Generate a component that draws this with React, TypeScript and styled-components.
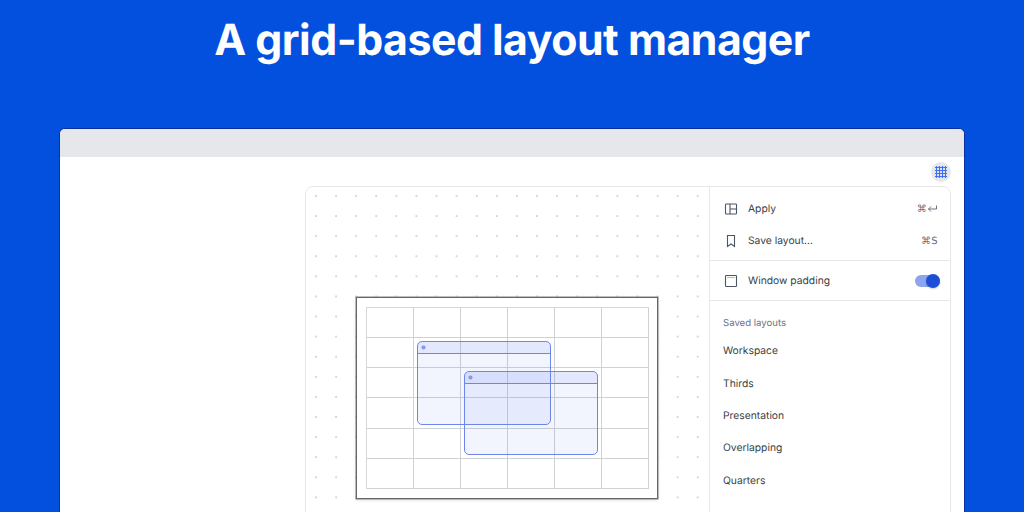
import React from "react";
import styled, { createGlobalStyle } from "styled-components";

const Global = createGlobalStyle`
  html, body { margin: 0; padding: 0; width: 1024px; height: 512px; overflow: hidden; background: #0450de; }
  * { box-sizing: border-box; }
  body { font-family: Inter, "Liberation Sans", sans-serif; text-rendering: geometricPrecision; }
`;

const Page = styled.div`
  width: 1024px;
  height: 512px;
  overflow: hidden;
  background: #0450de;
  display: flex;
  flex-direction: column;
  align-items: center;
`;

const Title = styled.h1`
  flex: none;
  margin: 0;
  height: 128px;
  padding-top: 13px;
  font-size: 42.8px;
  line-height: 56px;
  font-weight: 700;
  letter-spacing: -0.5px;
  color: #fff;
  white-space: nowrap;
`;

const AppWindow = styled.div`
  width: 906px;
  height: 400px;
  flex: none;
  background: #fff;
  border: 1px solid #0b2f9e;
  border-bottom: 0;
  border-radius: 6px 6px 0 0;
  overflow: hidden;
`;

const TitleBar = styled.div`
  height: 28px;
  background: #e5e7eb;
`;

const Body = styled.div`
  display: flex;
  flex-direction: column;
  align-items: flex-end;
  padding: 5px 13px 0 0;
`;

const GridButton = styled.div`
  width: 20px;
  height: 20px;
  border-radius: 50%;
  background: #e5e7eb;
  display: flex;
  align-items: center;
  justify-content: center;
`;

const Panel = styled.div`
  width: 646px;
  height: 340px;
  margin-top: 4px;
  border: 1px solid #e5e7eb;
  border-radius: 8px 8px 0 0;
  display: flex;
  overflow: hidden;
`;

const Canvas = styled.div`
  flex: none;
  width: 403px;
  padding: 110px 0 0 50px;
  background-image: radial-gradient(circle at 1px 1px, #d3d6db 0.7px, transparent 1.1px);
  background-size: 20.1px 20.1px;
  background-position: 9px 8px;
`;

const Monitor = styled.div`
  position: relative;
  width: 302px;
  height: 202px;
  padding: 9px;
  background: #fff;
  border: 1px solid #666;
  box-shadow: 0 0 0 0.5px #888, 0 1px 3px rgba(0, 0, 0, 0.15);
`;

const CellGrid = styled.div`
  display: grid;
  grid-template-columns: repeat(6, 1fr);
  grid-template-rows: repeat(6, 1fr);
  width: 282.5px;
  height: 182px;
  border-top: 1px solid #d6d8db;
  border-left: 1px solid #d6d8db;
`;

const Cell = styled.div`
  border-right: 1px solid #cfd1d4;
  border-bottom: 1px solid #cfd1d4;
`;

const MiniWindow = styled.div<{ $left: number; $top: number }>`
  position: absolute;
  left: ${(p) => p.$left}px;
  top: ${(p) => p.$top}px;
  width: 134px;
  height: 84px;
  border: 1px solid #6d86ea;
  border-radius: 5px;
  background: rgba(100, 125, 245, 0.085);
`;

const MiniBar = styled.div`
  height: 12px;
  padding: 4px 0 0 4px;
  border-bottom: 1px solid #6d86ea;
  background: rgba(100, 125, 245, 0.1);
`;

const MiniDot = styled.div`
  width: 3px;
  height: 3px;
  border-radius: 50%;
  background: #8c9eec;
  box-shadow: 0 0 0 0.5px #6d86ea;
`;

const Sidebar = styled.div`
  flex: 1;
  border-left: 1px solid #e5e7eb;
  color: #3a3f47;
  font-size: 10.3px;
`;

const Section = styled.div<{ $pad?: string }>`
  padding: ${(p) => p.$pad || "0"};
  border-bottom: 1px solid #e5e7eb;
`;

const Row = styled.div`
  height: 32px;
  display: flex;
  align-items: center;
  padding: 0 12px 0 14px;
`;

const RowIcon = styled.svg`
  width: 14px;
  height: 14px;
  flex: none;
  margin-right: 10px;
  fill: none;
  stroke: #4b5563;
  stroke-width: 1.1;
`;

const RowLabel = styled.span`
  flex: 1;
`;

const Shortcut = styled.span`
  display: flex;
  align-items: center;
  color: #6b7280;
  font-family: "DejaVu Sans", Inter, sans-serif;
  font-size: 10px;
  letter-spacing: 0.3px;
`;

const Toggle = styled.div`
  position: relative;
  width: 25px;
  height: 12px;
  margin-right: -2px;
  border-radius: 6px;
  background: #8ba5ee;
`;

const Knob = styled.div`
  position: absolute;
  right: 0;
  top: -1px;
  width: 14px;
  height: 14px;
  border-radius: 50%;
  background: #1d4ed8;
  box-shadow: 0 1px 2px rgba(0, 0, 0, 0.2);
`;

const SavedHeading = styled.div`
  height: 34px;
  padding: 16px 0 0 13px;
  font-size: 9.6px;
  line-height: 14px;
  color: #6b7280;
`;

const SavedItem = styled.div`
  height: 32.4px;
  display: flex;
  align-items: center;
  padding-left: 13px;
`;

const saved = ["Workspace", "Thirds", "Presentation", "Overlapping", "Quarters"];

export default function App() {
  return (
    <Page>
      <Global />
      <Title>A grid-based layout manager</Title>
      <AppWindow>
        <TitleBar />
        <Body>
          <GridButton>
            <svg width="14" height="14" viewBox="0 0 14 14" fill="none" stroke="#3f6ff2" strokeWidth="1.1">
              <path d="M2.5 1v12M5.5 1v12M8.5 1v12M11.5 1v12M1 2.5h12M1 5.5h12M1 8.5h12M1 11.5h12" />
            </svg>
          </GridButton>
          <Panel>
            <Canvas>
              <Monitor>
                <CellGrid>
                  {Array.from({ length: 36 }, (_, i) => (
                    <Cell key={i} />
                  ))}
                </CellGrid>
                <MiniWindow $left={60} $top={43}>
                  <MiniBar>
                    <MiniDot />
                  </MiniBar>
                </MiniWindow>
                <MiniWindow $left={107} $top={73}>
                  <MiniBar>
                    <MiniDot />
                  </MiniBar>
                </MiniWindow>
              </Monitor>
            </Canvas>
            <Sidebar>
              <Section $pad="6px 0 3px">
                <Row>
                  <RowIcon viewBox="0 0 14 14">
                    <rect x="1.5" y="2" width="11" height="10" rx="0.8" />
                    <path d="M6 2v10M6 7h6.5" />
                  </RowIcon>
                  <RowLabel>Apply</RowLabel>
                  <Shortcut>
                    ⌘
                    <svg width="11" height="10" viewBox="0 0 11 10" fill="none" stroke="#6b7280" strokeWidth="1">
                      <path d="M9.5 1.5v3.5H1.5M4 2.5L1.5 5 4 7.5" />
                    </svg>
                  </Shortcut>
                </Row>
                <Row>
                  <RowIcon viewBox="0 0 14 14">
                    <path d="M3.5 1.5h7v11L7 10l-3.5 2.5z" />
                  </RowIcon>
                  <RowLabel>Save layout...</RowLabel>
                  <Shortcut>⌘S</Shortcut>
                </Row>
              </Section>
              <Section $pad="4px 0 3px">
                <Row>
                  <RowIcon viewBox="0 0 14 14">
                    <rect x="1.5" y="1.5" width="11" height="11" rx="0.8" />
                    <path d="M3.5 3.5h7" strokeDasharray="1 1" strokeWidth="0.8" />
                  </RowIcon>
                  <RowLabel>Window padding</RowLabel>
                  <Toggle>
                    <Knob />
                  </Toggle>
                </Row>
              </Section>
              <SavedHeading>Saved layouts</SavedHeading>
              {saved.map((s) => (
                <SavedItem key={s}>{s}</SavedItem>
              ))}
            </Sidebar>
          </Panel>
        </Body>
      </AppWindow>
    </Page>
  );
}
